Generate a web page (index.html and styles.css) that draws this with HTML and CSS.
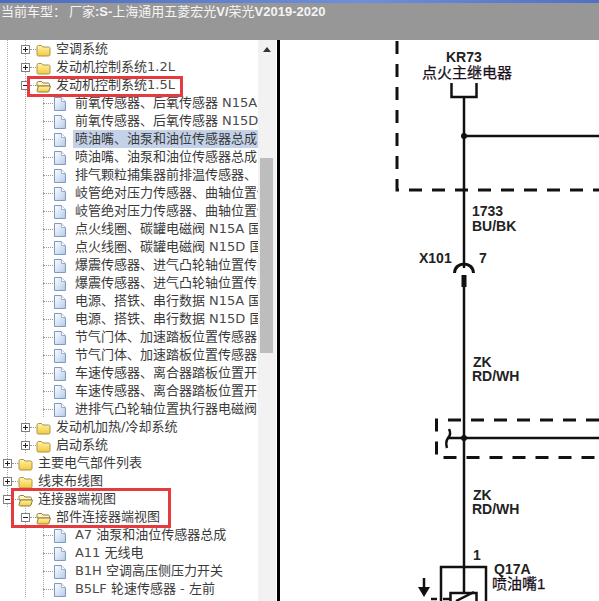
FILE: index.html
```html
<!DOCTYPE html>
<html lang="zh-CN">
<head>
  <meta charset="UTF-8">
  <title>当前车型</title>
  <link rel="stylesheet" href="styles.css">
</head>
<body>
  <svg class="defs" width="0" height="0">
    <defs>
      <linearGradient id="fold" x1="0" y1="0" x2="0" y2="1">
        <stop offset="0" stop-color="#fff4a8"/>
        <stop offset="1" stop-color="#f2c93e"/>
      </linearGradient>
      <linearGradient id="page" x1="0" y1="0" x2="1" y2="1">
        <stop offset="0" stop-color="#ffffff"/>
        <stop offset="1" stop-color="#b4cbec"/>
      </linearGradient>
    </defs>
    <symbol id="folder" viewBox="0 0 15 14">
      <path d="M1 4.5 C1 3 1.5 2.5 2.5 2.5 H5.5 L7 4 H12.5 C13.5 4 14 4.5 14 5.5 V11.5 C14 12.5 13.5 13 12.5 13 H2.5 C1.5 13 1 12.5 1 11.5 Z" fill="url(#fold)" stroke="#a8934a"/>
    </symbol>
    <symbol id="folder-open" viewBox="0 0 15 14">
      <path d="M1 4.5 C1 3 1.5 2.5 2.5 2.5 H5.5 L7 4 H12 C13 4 13.5 4.5 13.5 5.5 V7 H1 Z" fill="#fff6c4" stroke="#8f7c3c"/>
      <path d="M1 11.5 L2.5 7 H14.5 L13 12 C12.8 12.8 12.4 13 11.5 13 H2.5 C1.5 13 1 12.5 1 11.5 Z" fill="url(#fold)" stroke="#8f7c3c"/>
    </symbol>
    <symbol id="doc" viewBox="0 0 12 14">
      <path d="M0.5 0.5 H7.5 L11.5 4.5 V13.5 H0.5 Z" fill="url(#page)" stroke="#7f96b8"/>
      <path d="M7.5 0.5 V4.5 H11.5" fill="#fff" stroke="#98aed0"/>
    </symbol>
  </svg>

  <header class="topbar">
    <div class="strip"></div>
    <div class="car">当前车型： 厂家<b>:S-</b>上海通用五菱宏光<b>V/</b>荣光<b>V2019-2020</b></div>
  </header>

  <main class="main">
    <nav class="tree">
      <div class="rows">
        <div class="row sub"><i class="tog plus"></i><s class="link"></s><svg class="folder"><use href="#folder"/></svg><span class="name">空调系统</span></div>
        <div class="row sub"><i class="tog plus"></i><s class="link"></s><svg class="folder"><use href="#folder"/></svg><span class="name">发动机控制系统<em>1.2L</em></span></div>
        <div class="row sub"><i class="tog minus"></i><s class="link"></s><svg class="folder"><use href="#folder-open"/></svg><span class="name">发动机控制系统<em>1.5L</em></span></div>
        <div class="row leaf"><s class="link"></s><svg class="doc"><use href="#doc"/></svg><span class="name">前氧传感器、后氧传感器 <em>N15A</em></span></div>
        <div class="row leaf"><s class="link"></s><svg class="doc"><use href="#doc"/></svg><span class="name">前氧传感器、后氧传感器 <em>N15D</em></span></div>
        <div class="row leaf"><s class="link"></s><svg class="doc"><use href="#doc"/></svg><span class="name selected">喷油嘴、油泵和油位传感器总成</span></div>
        <div class="row leaf"><s class="link"></s><svg class="doc"><use href="#doc"/></svg><span class="name">喷油嘴、油泵和油位传感器总成</span></div>
        <div class="row leaf"><s class="link"></s><svg class="doc"><use href="#doc"/></svg><span class="name">排气颗粒捕集器前排温传感器、...</span></div>
        <div class="row leaf"><s class="link"></s><svg class="doc"><use href="#doc"/></svg><span class="name">岐管绝对压力传感器、曲轴位置传感器</span></div>
        <div class="row leaf"><s class="link"></s><svg class="doc"><use href="#doc"/></svg><span class="name">岐管绝对压力传感器、曲轴位置传感器</span></div>
        <div class="row leaf"><s class="link"></s><svg class="doc"><use href="#doc"/></svg><span class="name">点火线圈、碳罐电磁阀 <em>N15A</em> 国</span></div>
        <div class="row leaf"><s class="link"></s><svg class="doc"><use href="#doc"/></svg><span class="name">点火线圈、碳罐电磁阀 <em>N15D</em> 国</span></div>
        <div class="row leaf"><s class="link"></s><svg class="doc"><use href="#doc"/></svg><span class="name">爆震传感器、进气凸轮轴位置传感器</span></div>
        <div class="row leaf"><s class="link"></s><svg class="doc"><use href="#doc"/></svg><span class="name">爆震传感器、进气凸轮轴位置传感器</span></div>
        <div class="row leaf"><s class="link"></s><svg class="doc"><use href="#doc"/></svg><span class="name">电源、搭铁、串行数据 <em>N15A</em> 国</span></div>
        <div class="row leaf"><s class="link"></s><svg class="doc"><use href="#doc"/></svg><span class="name">电源、搭铁、串行数据 <em>N15D</em> 国</span></div>
        <div class="row leaf"><s class="link"></s><svg class="doc"><use href="#doc"/></svg><span class="name">节气门体、加速踏板位置传感器</span></div>
        <div class="row leaf"><s class="link"></s><svg class="doc"><use href="#doc"/></svg><span class="name">节气门体、加速踏板位置传感器</span></div>
        <div class="row leaf"><s class="link"></s><svg class="doc"><use href="#doc"/></svg><span class="name">车速传感器、离合器踏板位置开关</span></div>
        <div class="row leaf"><s class="link"></s><svg class="doc"><use href="#doc"/></svg><span class="name">车速传感器、离合器踏板位置开关</span></div>
        <div class="row leaf"><s class="link"></s><svg class="doc"><use href="#doc"/></svg><span class="name">进排气凸轮轴位置执行器电磁阀</span></div>
        <div class="row sub"><i class="tog plus"></i><s class="link"></s><svg class="folder"><use href="#folder"/></svg><span class="name">发动机加热/冷却系统</span></div>
        <div class="row sub"><i class="tog plus"></i><s class="link"></s><svg class="folder"><use href="#folder"/></svg><span class="name">启动系统</span></div>
        <div class="row top"><i class="tog plus"></i><s class="link"></s><svg class="folder"><use href="#folder"/></svg><span class="name">主要电气部件列表</span></div>
        <div class="row top"><i class="tog plus"></i><s class="link"></s><svg class="folder"><use href="#folder"/></svg><span class="name">线束布线图</span></div>
        <div class="row top"><i class="tog minus"></i><s class="link"></s><svg class="folder"><use href="#folder-open"/></svg><span class="name">连接器端视图</span></div>
        <div class="row sub last"><i class="tog minus"></i><s class="link"></s><svg class="folder"><use href="#folder-open"/></svg><span class="name">部件连接器端视图</span></div>
        <div class="row leaf last"><s class="link"></s><svg class="doc"><use href="#doc"/></svg><span class="name"><em>A7</em> 油泵和油位传感器总成</span></div>
        <div class="row leaf last"><s class="link"></s><svg class="doc"><use href="#doc"/></svg><span class="name"><em>A11</em> 无线电</span></div>
        <div class="row leaf last"><s class="link"></s><svg class="doc"><use href="#doc"/></svg><span class="name"><em>B1H</em> 空调高压侧压力开关</span></div>
        <div class="row leaf last"><s class="link"></s><svg class="doc"><use href="#doc"/></svg><span class="name"><em>B5LF</em> 轮速传感器 <em>-</em> 左前</span></div>
      </div>
      <div class="scrollbar">
        <div class="arrow"></div>
        <div class="thumb"></div>
      </div>
      <div class="mark mark-engine"></div>
      <div class="mark mark-conn"></div>
    </nav>

    <svg class="diagram" width="319" height="561" viewBox="280 40 319 561">
      <g class="dash">
        <path d="M397 41 V190 H599"/>
        <path d="M599 420 H436.5 V457.5 H599"/>
      </g>
      <g class="wire">
        <path d="M451.5 83 V97 H476.5 V83"/>
        <path d="M464 97 V268"/>
        <path d="M464 287 V592"/>
        <path d="M464 136 H599"/>
        <path d="M464 438 H599"/>
        <path d="M448 438 H464"/>
        <path d="M449 429 C451 433 450 436 448 438 C446 441 446 445 447 448"/>
        <path d="M441 601 V567 H486 V601"/>
        <path d="M450.5 601 V593 H476.5 V601"/>
        <path d="M456 601 L474 592"/>
        <path d="M424 578 V590"/>
        <path d="M431 599 H437"/>
        <path d="M443 599 H450"/>
      </g>
      <path class="wire thick" d="M454.5 273 C455 261 473 261 473.5 273"/>
      <rect class="ink" x="461.5" y="275" width="5" height="12"/>
      <circle class="ink" cx="464" cy="136" r="3"/>
      <circle class="ink" cx="464" cy="438" r="3"/>
      <path class="ink" d="M418 587 H430 L424 597 Z"/>

      <text class="lab" x="446" y="62">KR73</text>
      <text class="cjk" x="422" y="78">点火主继电器</text>
      <text class="lab" x="472" y="216">1733</text>
      <text class="lab" x="472" y="231">BU/BK</text>
      <text class="lab" x="419" y="263">X101</text>
      <text class="lab" x="479" y="263">7</text>
      <text class="lab" x="473" y="367">ZK</text>
      <text class="lab" x="472" y="381">RD/WH</text>
      <text class="lab" x="473" y="500">ZK</text>
      <text class="lab" x="472" y="514">RD/WH</text>
      <text class="lab" x="473" y="560">1</text>
      <text class="lab" x="494" y="574">Q17A</text>
      <text class="cjk" x="492" y="589">喷油嘴1</text>
    </svg>
  </main>
</body>
</html>
```

FILE: styles.css
```css
body {
  margin: 0;
  width: 599px;
  height: 601px;
  overflow: hidden;
  background-color: white;
  font-family: "Noto Sans CJK SC", "Liberation Sans", sans-serif;
}

.defs {
  display: block;
  height: 0;
}

.topbar {
  height: 40px;
  background-color: #979797;
  color: #f4f4f4;
}

.strip {
  height: 3px;
  background: linear-gradient(90deg, #4a6cc0, #6f8fd8 60%, #4f71c4);
}

.car {
  font-size: 13px;
  line-height: 15px;
  padding-left: 1px;
  white-space: pre;
}

.car b {
  font-family: "Liberation Sans", sans-serif;
  font-weight: bold;
}

.main {
  display: flex;
  height: 561px;
  position: relative;
}

.tree {
  display: flex;
  width: 277px;
  border-right: 3px solid black;
  position: relative;
  overflow: hidden;
}

.rows {
  width: 258px;
  overflow: hidden;
}

.row {
  display: flex;
  align-items: center;
  height: 18px;
  font-family: "DejaVu Sans", "Noto Sans CJK SC", sans-serif;
  font-size: 13px;
  color: #3a3a3a;
  white-space: pre;
  background-image:
    linear-gradient(#a8a8a8 50%, transparent 50%),
    linear-gradient(#a8a8a8 50%, transparent 50%),
    linear-gradient(#a8a8a8 50%, transparent 50%);
  background-size: 1px 2px;
  background-repeat: repeat-y;
  background-position: 7px 0, -5px 0, -5px 0;
}

.row.top { padding-left: 3px; }
.row.sub { padding-left: 21px; background-position: 7px 0, 25px 0, -5px 0; }
.row.leaf { padding-left: 43px; background-position: 7px 0, 25px 0, 43px 0; }
.row.sub.last { background-position: -5px 0, 25px 0, -5px 0; }
.row.leaf.last { background-position: -5px 0, 25px 0, 43px 0; }

.tog {
  box-sizing: border-box;
  width: 9px;
  height: 9px;
  border: 1px solid #808080;
  background-color: white;
  position: relative;
}

.tog::before {
  content: '';
  position: absolute;
  left: 1px;
  top: 3px;
  width: 5px;
  height: 1px;
  background-color: #222;
}

.tog.plus::after {
  content: '';
  position: absolute;
  left: 3px;
  top: 1px;
  width: 1px;
  height: 5px;
  background-color: #222;
}

.link {
  width: 6px;
  height: 0;
  border-top: 1px dotted #999;
}

.leaf .link {
  width: 10px;
}

.folder {
  width: 15px;
  height: 14px;
  margin: 2px 5px 0 0;
}

.doc {
  width: 12px;
  height: 14px;
  margin: 2px 7px 0 1px;
}

.name {
  line-height: 18px;
}

.name em {
  font-style: normal;
  color: #4a4a4a;
}

.leaf .name {
  box-sizing: border-box;
  width: 186px;
  height: 18px;
  padding: 0 2px;
  overflow: hidden;
}

.leaf .name.selected {
  background-color: #c3d2e8;
}

.scrollbar {
  width: 18px;
  background-color: #f2f2f2;
}

.arrow {
  width: 0;
  height: 0;
  margin: 7px 0 0 5px;
  border-left: 4px solid transparent;
  border-right: 4px solid transparent;
  border-bottom: 5px solid #333;
}

.thumb {
  width: 13px;
  height: 195px;
  margin: 106px 0 0 2px;
  background-color: #bdbdbd;
}

.mark {
  position: absolute;
  box-sizing: border-box;
  border: 3px solid #e53b3f;
}

.mark-engine {
  left: 27px;
  top: 36px;
  width: 156px;
  height: 21px;
}

.mark-conn {
  left: 11px;
  top: 448px;
  width: 160px;
  height: 40px;
}

.diagram {
  display: block;
  flex: none;
  background-color: white;
}

.dash path {
  fill: none;
  stroke: #111;
  stroke-width: 3;
  stroke-dasharray: 13 10;
}

.wire {
  fill: none;
  stroke: #111;
}

.wire path {
  stroke-width: 2.5;
}

.wire.thick {
  stroke-width: 3;
}

.ink {
  fill: #111;
}

.lab {
  font-family: "Liberation Sans", sans-serif;
  font-weight: bold;
  font-size: 14px;
  fill: #222;
}

.cjk {
  font-family: "Liberation Sans", "Noto Sans CJK SC", sans-serif;
  font-size: 15px;
  fill: #1a101a;
  stroke: #1a101a;
  stroke-width: 0.25;
}
```
